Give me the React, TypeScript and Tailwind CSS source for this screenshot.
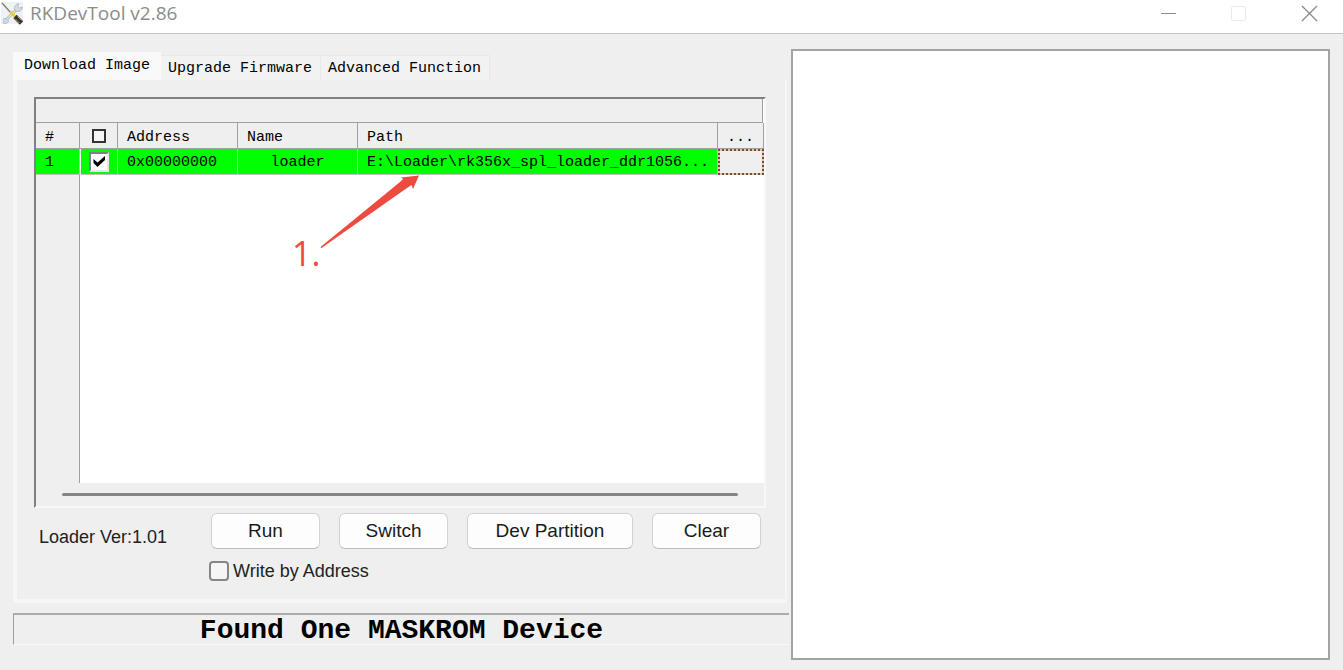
import { useState } from "react";

type ImageRow = {
  id: number;
  checked: boolean;
  address: string;
  name: string;
  path: string;
};

const tabs = ["Download Image", "Upgrade Firmware", "Advanced Function"];

const starterRows: ImageRow[] = [
  {
    id: 1,
    checked: true,
    address: "0x00000000",
    name: "loader",
    path: "E:\\Loader\\rk356x_spl_loader_ddr1056...",
  },
];

const headCell =
  "h-[26px] border-r border-b border-[#a0a0a0] px-[9px] pt-1 text-left font-normal";
const bodyCell =
  "h-[26px] border-r border-b border-[#c0c0c0] bg-[#00ff00] px-[9px] pt-0.5";
const checkCell =
  "h-[26px] border-r border-b border-[#c0c0c0] border-l border-l-white bg-[#00ff00] px-2";
const actionButton =
  "h-9 rounded-md border border-[#d2d2d2] border-b-[#bdbdbd] bg-[#fdfdfd] text-[19px] leading-6 text-[#1a1a1a]";

function ToolsIcon() {
  return (
    <svg className="h-6 w-6" viewBox="0 0 24 24" aria-hidden="true">
      <rect x="1" y="1" width="22" height="22" fill="#eef1f5" />
      <path d="M6 19 L16 9" stroke="#b4bec8" strokeWidth="2.6" />
      <path d="M6 19 L16 9" stroke="#eceff2" strokeWidth="1" />
      <path
        d="M15 10 C13.5 7 15 3.5 18.5 2.5 L18 5.5 L19.5 7 L22.5 6 C22.5 9.5 18.5 11.5 15 10 Z"
        fill="#d3dae1"
        stroke="#9aa6b2"
        strokeWidth="0.6"
      />
      <path
        d="M3 22 L4 20 L3 18 C5 17 8 17.5 8.5 19.5 C8.5 21.5 7 22.5 5 22.5 Z"
        fill="#d3dae1"
        stroke="#9aa6b2"
        strokeWidth="0.6"
      />
      <path d="M2 2 L11 12" stroke="#7d7a66" strokeWidth="1.2" />
      <path d="M10 10.5 L15.5 16" stroke="#e8cf3c" strokeWidth="3" />
      <path d="M15 15.5 L21.5 22" stroke="#343426" strokeWidth="4.8" />
      <path
        d="M15 17.5 L19.5 22 M17.5 15.5 L21.5 19.5"
        stroke="#cdb934"
        strokeWidth="0.8"
      />
    </svg>
  );
}

function TitleBar() {
  return (
    <header className="flex h-[34px] items-start justify-between border-b border-[#c3c3c3] bg-white">
      <div className="flex h-[26px] items-center gap-1.5">
        <ToolsIcon />
        <h1 className="font-['Open_Sans',sans-serif] text-[19px] leading-6 text-[#8c8c8c]">
          RKDevTool v2.86
        </h1>
      </div>
      <div className="flex">
        <button
          className="flex h-7 w-[70px] items-center justify-center"
          type="button"
          aria-label="Minimize"
        >
          <svg className="h-4 w-4" viewBox="0 0 16 16">
            <path d="M1 7.5 H16" stroke="#8a8a8a" />
          </svg>
        </button>
        <button
          className="flex h-7 w-[70px] items-center justify-center"
          type="button"
          aria-label="Maximize"
          disabled
        >
          <svg className="h-4 w-4" viewBox="0 0 16 16">
            <rect
              x="1.5"
              y="0.5"
              width="14"
              height="14"
              rx="1.5"
              fill="none"
              stroke="#ebebeb"
            />
          </svg>
        </button>
        <button
          className="flex h-7 w-[70px] items-center justify-center"
          type="button"
          aria-label="Close"
        >
          <svg className="h-4 w-4 overflow-visible" viewBox="0 0 16 16">
            <path
              d="M2 0 L17 15 M17 0 L2 15"
              stroke="#8a8a8a"
              strokeWidth="1.3"
            />
          </svg>
        </button>
      </div>
    </header>
  );
}

export default function App() {
  const [activeTab, setActiveTab] = useState(tabs[0]);
  const [rows, setRows] = useState<ImageRow[]>(starterRows);
  const [writeByAddress, setWriteByAddress] = useState(false);

  function toggleRow(id: number) {
    setRows((currentRows) =>
      currentRows.map((row) =>
        row.id === id ? { ...row, checked: !row.checked } : row,
      ),
    );
  }

  return (
    <main className="flex min-h-screen flex-col bg-[#efefef] font-['Liberation_Sans',sans-serif] text-black">
      <TitleBar />

      <div className="flex flex-1 gap-[2px] pt-[15px] pr-[13px] pb-[10px] pl-[13px]">
        <div className="flex w-[776px] shrink-0 flex-col pt-[3px] pb-[15px]">
          <nav className="flex h-7 items-end font-['Liberation_Mono',monospace] text-[15px]">
            {tabs.map((tab) => (
              <button
                className={
                  activeTab === tab
                    ? "h-7 bg-[#f9f9f9] px-[11px]"
                    : "h-[25px] border-t border-r border-[#e8e8e8] bg-[#f2f2f2] pt-0.5 pr-2 pl-[7px]"
                }
                key={tab}
                onClick={() => setActiveTab(tab)}
                type="button"
              >
                {tab}
              </button>
            ))}
          </nav>

          <section className="mr-0.5 flex flex-1 flex-col border-r-2 border-b-4 border-l-4 border-[#f6f6f6] pt-[17px] pl-[17px]">
            <div className="relative flex w-[732px] flex-1 flex-col border-2 border-t-[#808080] border-r-[#f8f8f8] border-b-[#f8f8f8] border-l-[#808080] bg-white">
              <div className="mr-px h-6 border-r border-b border-[#a0a0a0] bg-[#efefef]" />
              <table className="w-full table-fixed border-separate border-spacing-0 font-['Liberation_Mono',monospace] text-[15px] leading-5">
                <colgroup>
                  <col className="w-11" />
                  <col className="w-[38px]" />
                  <col className="w-[120px]" />
                  <col className="w-[120px]" />
                  <col />
                  <col className="w-[46px]" />
                </colgroup>
                <thead className="bg-[#efefef]">
                  <tr>
                    <th className={headCell}>#</th>
                    <th className="h-[26px] border-r border-b border-[#a0a0a0] pl-3">
                      <input
                        className="block h-[14px] w-[14px] appearance-none border-2 border-[#333333] bg-[#f5f5f5]"
                        type="checkbox"
                        aria-label="Select all"
                      />
                    </th>
                    <th className={headCell}>Address</th>
                    <th className={headCell}>Name</th>
                    <th className={headCell}>Path</th>
                    <th className={headCell}>...</th>
                  </tr>
                </thead>
                <tbody>
                  {rows.map((row) => (
                    <tr key={row.id}>
                      <td className={bodyCell}>{row.id}</td>
                      <td className={checkCell}>
                        <label className="relative block h-5 w-5">
                          <input
                            className="block h-5 w-5 appearance-none border-2 border-t-[#808080] border-r-[#e6e6e6] border-b-[#e6e6e6] border-l-[#808080] bg-white"
                            type="checkbox"
                            aria-label={`Use ${row.name}`}
                            checked={row.checked}
                            onChange={() => toggleRow(row.id)}
                          />
                          {row.checked ? (
                            <svg
                              className="pointer-events-none absolute inset-0 h-5 w-5"
                              viewBox="0 0 20 20"
                            >
                              <path
                                d="M4.5 7 L8.5 10.5 L16 4 V8 L8.5 15 L4.5 11 Z"
                                fill="#000000"
                              />
                            </svg>
                          ) : null}
                        </label>
                      </td>
                      <td className={bodyCell}>{row.address}</td>
                      <td className={`${bodyCell} text-center`}>{row.name}</td>
                      <td className={`${bodyCell} whitespace-nowrap`}>
                        {row.path}
                      </td>
                      <td className="h-[26px] bg-[#d9c9bb] p-0">
                        <button
                          className="block h-[26px] w-full border-2 border-dotted border-[#7a4a2a] bg-[#efefef] bg-clip-padding"
                          type="button"
                          aria-label="Browse"
                        />
                      </td>
                    </tr>
                  ))}
                </tbody>
              </table>
              <div className="w-11 flex-1 border-r border-[#a0a0a0] bg-[#efefef]" />
              <div className="flex h-[23px] items-center bg-[#efefef] px-[26px]">
                <div className="h-[3px] w-full rounded-full bg-[#858585]" />
              </div>

              {/* step marker pointing at the loader path */}
              <div className="pointer-events-none absolute top-[76px] left-[256px] h-24 w-32 text-[#ee4b40]">
                <svg className="h-24 w-32" viewBox="0 0 128 96">
                  <path
                    d="M28.5 72 L108 7 L111 4 L109 2.5 L127 0.5 L121 14 L119.5 10 L115 13 L29.5 73 Z"
                    fill="currentColor"
                  />
                </svg>
                <span className="absolute bottom-0.5 left-0 font-['Open_Sans',sans-serif] text-[34px] leading-8">
                  1.
                </span>
              </div>
            </div>

            <div className="mt-[5px] flex h-9 gap-[19px]">
              <p className="w-[158px] pt-3 pl-[5px] text-lg leading-6 text-[#222222]">
                Loader Ver:1.01
              </p>
              <button className={`${actionButton} w-[109px]`} type="button">
                Run
              </button>
              <button className={`${actionButton} w-[109px]`} type="button">
                Switch
              </button>
              <button className={`${actionButton} w-[166px]`} type="button">
                Dev Partition
              </button>
              <button className={`${actionButton} w-[109px]`} type="button">
                Clear
              </button>
            </div>

            <label className="mt-[10px] mb-4 ml-[175px] flex h-6 items-center gap-1 self-start text-lg leading-6 text-[#222222]">
              <input
                className="h-5 w-5 appearance-none rounded-sm border-2 border-[#868686] bg-[#f5f5f5] checked:bg-[#0067c0]"
                type="checkbox"
                checked={writeByAddress}
                onChange={(event) => setWriteByAddress(event.target.checked)}
              />
              Write by Address
            </label>
          </section>

          <p className="mt-[10px] h-8 border-t-2 border-b border-l border-t-[#acacac] border-b-[#fafafa] border-l-[#a0a0a0] text-center font-['Liberation_Mono',monospace] text-[28px] leading-8 font-bold">
            Found One MASKROM Device
          </p>
        </div>

        <section
          className="flex-1 border-2 border-[#a3a3a3] bg-white"
          aria-label="Log"
        />
      </div>
    </main>
  );
}
